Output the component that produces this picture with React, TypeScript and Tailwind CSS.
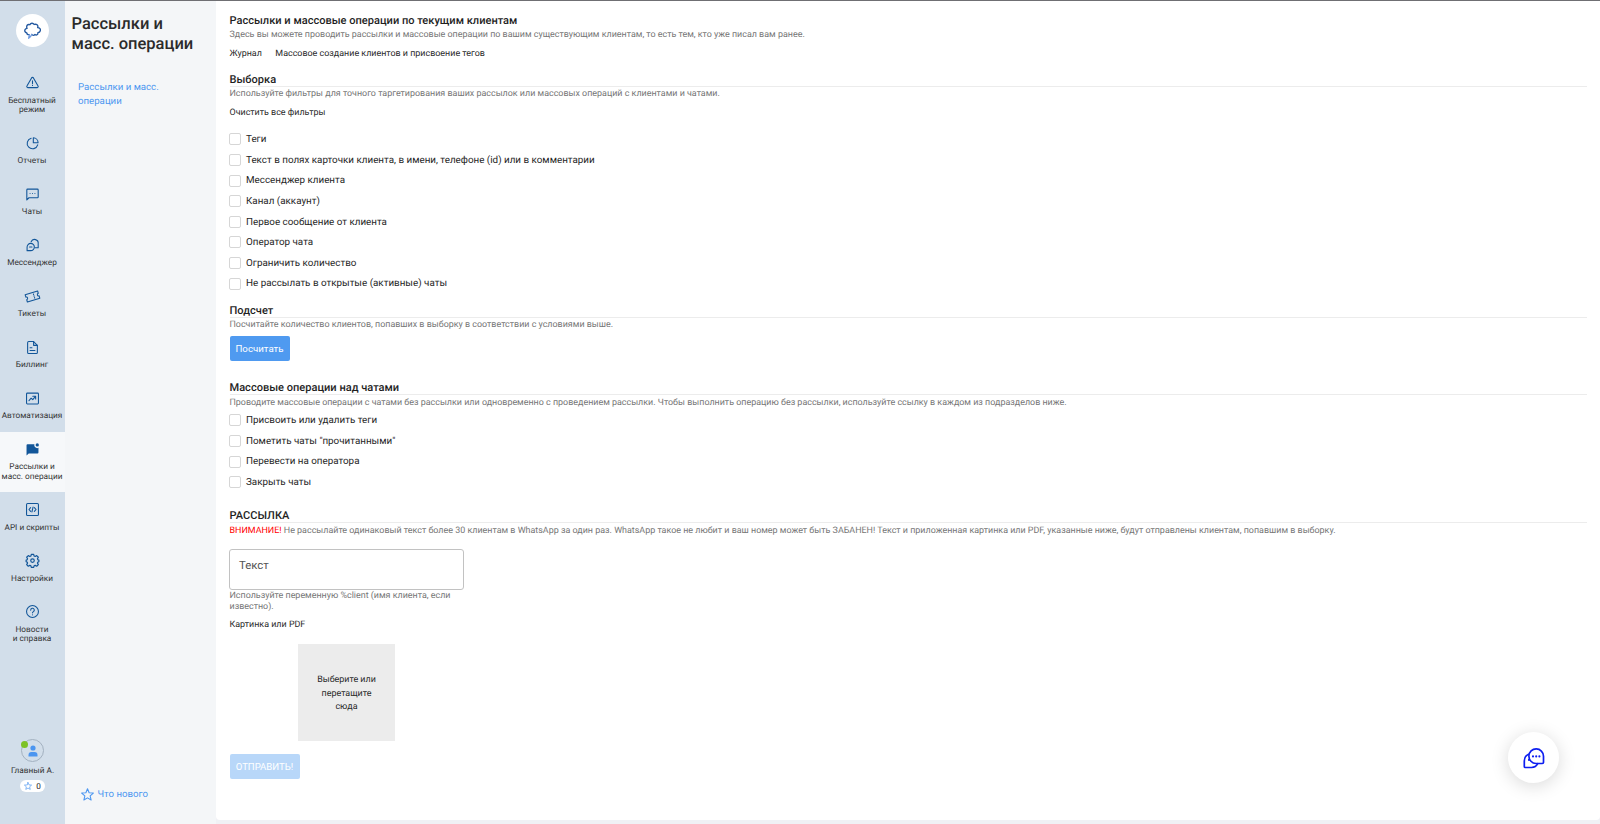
import type { ReactNode } from 'react';

function Glyph({ children, className = 'size-[15px]' }: { children: ReactNode; className?: string }) {
  return (
    <svg
      viewBox="0 0 24 24"
      className={className}
      fill="none"
      stroke="currentColor"
      strokeWidth="2"
      strokeLinecap="round"
      strokeLinejoin="round"
    >
      {children}
    </svg>
  );
}

const STAR = 'M12 1.500l3 7.200 7.800.6-5.900 5.200 1.800 7.700L12 18.200l-6.700 4 1.800-7.700L1.200 9.300l7.800-.6z';

type NavItem = { lines: string[]; icon: ReactNode; active?: boolean };

const NAV: NavItem[] = [
  {
    lines: ['Бесплатный', 'режим'],
    icon: (
      <>
        <path d="M10.300 3.500L1.700 18.500a1.900 1.900 0 0 0 1.700 2.900h17.200a1.900 1.900 0 0 0 1.700-2.900L13.700 3.500a2 2 0 0 0-3.400 0z" />
        <path d="M12 9v5M12 17.200v.3" />
      </>
    ),
  },
  {
    lines: ['Отчеты'],
    icon: (
      <>
        <path d="M9.500 2.300A9.900 9.900 0 1 0 21.600 14.500" />
        <path d="M13.500 1.500v9h8.800a9 9 0 0 0-8.800-9z" />
      </>
    ),
  },
  {
    lines: ['Чаты'],
    icon: (
      <>
        <path d="M1.500 22V3.500a1.500 1.500 0 0 1 1.500-1.500h18a1.500 1.500 0 0 1 1.500 1.500v13a1.500 1.500 0 0 1-1.500 1.500H5.500z" />
        <path d="M7.500 10v.1M12 10v.1M16.500 10v.1" />
      </>
    ),
  },
  {
    lines: ['Мессенджер'],
    icon: (
      <>
        <path d="M2 21.500v-6.500a6.700 6.700 0 1 1 6.700 6.500z" />
        <path d="M9.500 5a6.800 6.800 0 0 1 13 3.500V16h-6" />
        <path d="M6.500 14.800h4.500" />
      </>
    ),
  },
  {
    lines: ['Тикеты'],
    icon: (
      <g transform="rotate(-17 12 12)">
        <path d="M0 5h24v4.500a2.500 2.500 0 0 0 0 5V19H0v-4.500a2.500 2.500 0 0 0 0-5z" />
        <path d="M15 8v1M15 11.500v1M15 15v1" />
      </g>
    ),
  },
  {
    lines: ['Биллинг'],
    icon: (
      <>
        <path d="M14 1H5a2 2 0 0 0-2 2v18a2 2 0 0 0 2 2h14a2 2 0 0 0 2-2V8z" />
        <path d="M14 1v7h7M7.500 12.500h3.500M7.500 17.500h9" />
      </>
    ),
  },
  {
    lines: ['Автоматизация'],
    icon: (
      <>
        <rect x="1" y="2" width="22" height="20" rx="1.500" />
        <path d="M5.500 16l4-4.500 3 2.500 5-6M12.500 7.700h5.300v5" />
      </>
    ),
  },
  {
    lines: ['Рассылки и', 'масс. операции'],
    active: true,
    icon: (
      <>
        <path
          d="M1 23V4A1.800 1.800 0 0 1 2.800 2.200H15.500A5.500 5.500 0 0 0 23 8.900V17.500a1.800 1.800 0 0 1-1.800 1.800H5z"
          fill="currentColor"
          stroke="none"
        />
        <circle cx="20.800" cy="3.500" r="3" fill="currentColor" stroke="none" />
      </>
    ),
  },
  {
    lines: ['API и скрипты'],
    icon: (
      <>
        <rect x="1" y="1" width="22" height="22" rx="2" />
        <path d="M8.500 8.500L5.500 12l3 3.500M15.500 8.500l3 3.500-3 3.500M13 7.500l-2 9" />
      </>
    ),
  },
  {
    lines: ['Настройки'],
    icon: (
      <g transform="translate(12 12) scale(1.090) translate(-12 -12.300)">
        <path d="M10 1.800h4l.7 2.900 1.900.8 2.500-1.500 2.800 2.800-1.500 2.500.8 1.900 1.600.3v2.900l-1.700.6-.7 1.700 1.500 2.500-2.800 2.800-2.500-1.500-1.900.8-.7 2.700h-4l-.7-2.700-1.900-.8-2.500 1.500-2.800-2.800 1.500-2.500-.7-1.700-1.700-.6v-2.900l1.600-.3.8-1.900-1.500-2.500 2.800-2.800 2.500 1.500 1.900-.8z" />
        <circle cx="12" cy="12.500" r="3" />
      </g>
    ),
  },
  {
    lines: ['Новости', 'и справка'],
    icon: (
      <>
        <circle cx="12" cy="12" r="11" />
        <path d="M8.700 9.500a3.300 3.300 0 1 1 5 2.700c-1.200.7-1.700 1.200-1.700 2.300M12 18v.2" />
      </>
    ),
  },
];

function Sidebar() {
  return (
    <aside className="flex w-[65px] shrink-0 flex-col items-center bg-[#d2deea]">
      <div className="mt-[13px] mb-[18px] flex size-[33px] shrink-0 items-center justify-center rounded-full bg-white">
        <svg viewBox="0 0 24 24" className="size-[17px]" fill="none" strokeWidth="1.900" strokeLinecap="round" strokeLinejoin="round">
          <path
            stroke="#2459a0"
            d="M7.600 17.800C5.600 18.300 4 17.200 3.900 15.400C1.500 14.600.5 12.700 1.500 10.800C2 9.900 3.200 9.300 4.300 9.100C2.800 5.500 5 2.500 8.300 3.800C9.500 1.200 13 1.200 14.300 3.500C17.600 2.300 20.500 4.500 19.300 7.900C22.300 8 23.700 10 23 12.300C22.500 14.200 21 15 19.600 15.100C20 17.900 17.600 19.200 15.500 17.600C14.200 19.200 12 19.200 10.900 17.600"
          />
          <path stroke="#6f9be0" d="M7.600 17.800L6.600 23C8.600 21.800 10 19.800 10.900 17.600" />
        </svg>
      </div>
      {NAV.map((item) => (
        <div
          key={item.lines[0]}
          className={
            'flex w-full shrink-0 flex-col items-center pt-[11px] text-[#125699] ' +
            (item.lines.length > 1 ? 'h-[60.500px] ' : 'h-[51px] ') +
            (item.active ? 'bg-[#f6f8fa]' : '')
          }
        >
          <Glyph className="size-[13px] overflow-visible">{item.icon}</Glyph>
          <div className="mt-[7.800px] -ml-[1px] text-center text-[8.250px] leading-[9.600px] whitespace-nowrap text-[#333]">
            {item.lines.map((line) => (
              <div key={line}>{line}</div>
            ))}
          </div>
        </div>
      ))}
      <div className="mt-auto mb-[32px] flex flex-col items-center">
        <div className="relative flex size-[23px] items-center justify-center rounded-full border border-[#a3b1c0]">
          <svg viewBox="0 0 10 12" className="h-[12px] w-[10px]" fill="#4c96f0">
            <circle cx="5" cy="3" r="2.600" />
            <path d="M.5 11.500V10a3 3 0 0 1 3-3h3a3 3 0 0 1 3 3v1.500z" />
          </svg>
          <span className="absolute top-[1px] left-[-1px] size-[7px] rounded-full bg-[#7dc225]" />
        </div>
        <div className="mt-[4px] text-[8.250px] leading-[11px] whitespace-nowrap text-[#333]">Главный А.</div>
        <div className="mt-[3px] flex h-[12px] w-[25px] items-center justify-center gap-[4px] rounded-full bg-white text-[8.170px] text-[#222]">
          <Glyph className="size-[8px] overflow-visible text-[#4c96f0]">
            <path d={STAR} />
          </Glyph>
          <span>0</span>
        </div>
      </div>
    </aside>
  );
}

function SectionPanel() {
  return (
    <div className="flex w-[151px] shrink-0 flex-col bg-[#f4f6f8]">
      <h1 className="mt-[13.500px] ml-[6.500px] text-[16.500px] leading-[20px] font-medium whitespace-nowrap text-[#2b2b2b]">
        Рассылки и
        <br />
        масс. операции
      </h1>
      <a className="mt-[26.500px] ml-[13px] text-[9.670px] leading-[13.500px] whitespace-nowrap text-[#4c96f0]">
        Рассылки и масс.
        <br />
        операции
      </a>
      <a className="mt-auto mb-[22px] ml-[16px] flex items-center gap-[3.500px] text-[9.670px] leading-[14px] whitespace-nowrap text-[#4c96f0]">
        <Glyph className="size-[13px] overflow-visible">
          <path d={STAR} />
        </Glyph>
        <span className="pt-[2px]">Что нового</span>
      </a>
    </div>
  );
}

function Hint({ children }: { children: ReactNode }) {
  return <p className="pt-[1px] text-[8.940px] leading-[10.500px] whitespace-nowrap text-[#767676]">{children}</p>;
}

function SectionTitle({ children }: { children: ReactNode }) {
  return (
    <h2 className="mb-[1.500px] h-[14px] w-[1357px] border-b border-[#ececec] text-[11.050px] leading-[14px] font-medium whitespace-nowrap text-[#1f1f1f]">
      {children}
    </h2>
  );
}

function Checks({ items }: { items: string[] }) {
  return (
    <div className="flex flex-col">
      {items.map((label) => (
        <label key={label} className="flex h-[20.640px] items-center">
          <span className="-ml-[0.500px] size-[12px] rounded-[2px] border border-[#d6d6d6]" />
          <span className="ml-[5px] pt-[1.500px] text-[9.830px] leading-[12px] whitespace-nowrap text-[#262626]">{label}</span>
        </label>
      ))}
    </div>
  );
}

const FILTERS = [
  'Теги',
  'Текст в полях карточки клиента, в имени, телефоне (id) или в комментарии',
  'Мессенджер клиента',
  'Канал (аккаунт)',
  'Первое сообщение от клиента',
  'Оператор чата',
  'Ограничить количество',
  'Не рассылать в открытые (активные) чаты',
];

const OPERATIONS = ['Присвоить или удалить теги', 'Пометить чаты "прочитанными"', 'Перевести на оператора', 'Закрыть чаты'];

function Content() {
  return (
    <main className="mb-[4px] flex min-w-0 flex-1 flex-col items-start rounded-b-[4px] bg-white pl-[13.500px]">
      <h2 className="mt-[13px] mb-[0.500px] text-[11.050px] leading-[14px] font-medium whitespace-nowrap text-[#1f1f1f]">
        Рассылки и массовые операции по текущим клиентам
      </h2>
      <Hint>Здесь вы можете проводить рассылки и массовые операции по вашим существующим клиентам, то есть тем, кто уже писал вам ранее.</Hint>
      <nav className="mt-[7.500px] flex gap-[13.500px] text-[8.940px] leading-[12px] whitespace-nowrap text-[#2a2a2a]">
        <a>Журнал</a>
        <a>Массовое создание клиентов и присвоение тегов</a>
      </nav>

      <section className="mt-[13px]">
        <SectionTitle>Выборка</SectionTitle>
        <Hint>Используйте фильтры для точного таргетирования ваших рассылок или массовых операций с клиентами и чатами.</Hint>
        <a className="mt-[7px] mb-[10.500px] block text-[8.940px] leading-[12px] whitespace-nowrap text-[#2a2a2a]">
          Очистить все фильтры
        </a>
        <Checks items={FILTERS} />
      </section>

      <section className="mt-[9.500px]">
        <SectionTitle>Подсчет</SectionTitle>
        <Hint>Посчитайте количество клиентов, попавших в выборку в соответствии с условиями выше.</Hint>
        <button className="mt-[5px] block h-[25px] w-[60px] rounded-[2px] bg-[#4f9af0] pt-[2px] text-[9.700px] text-white">
          Посчитать
        </button>
      </section>

      <section className="mt-[20.500px]">
        <SectionTitle>Массовые операции над чатами</SectionTitle>
        <Hint>
          Проводите массовые операции с чатами без рассылки или одновременно с проведением рассылки. Чтобы выполнить операцию
          без рассылки, используйте ссылку в каждом из подразделов ниже.
        </Hint>
        <div className="mt-[2px]">
          <Checks items={OPERATIONS} />
        </div>
      </section>

      <section className="mt-[16.500px]">
        <SectionTitle>РАССЫЛКА</SectionTitle>
        <Hint>
          <span className="text-[#f00]">ВНИМАНИЕ!</span> Не рассылайте одинаковый текст более 30 клиентам в WhatsApp за один
          раз. WhatsApp такое не любит и ваш номер может быть ЗАБАНЕН! Текст и приложенная картинка или PDF, указанные ниже,
          будут отправлены клиентам, попавшим в выборку.
        </Hint>
        <div className="mt-[13px] -ml-[0.500px] h-[41px] w-[235px] rounded-[3px] border border-[#c2c2c2] px-[9px] pt-[7.500px] text-[11.400px] leading-[14px] text-[#555]">
          Текст
        </div>
        <Hint>
          Используйте переменную %client (имя клиента, если
          <br />
          известно).
        </Hint>
        <div className="mt-[6.500px] text-[8.940px] leading-[12px] text-[#2a2a2a]">Картинка или PDF</div>
        <div className="mt-[13.500px] ml-[68.500px] flex size-[97px] items-center justify-center bg-[#ececec] pt-[3.500px] text-center text-[8.940px] leading-[13.500px] text-[#2a2a2a]">
          Выберите или
          <br />
          перетащите
          <br />
          сюда
        </div>
        <button className="mt-[13px] block h-[25px] w-[70px] rounded-[2px] bg-[#b8d7f9] pt-[1px] text-[9.600px] text-white">
          ОТПРАВИТЬ!
        </button>
      </section>
    </main>
  );
}

function ChatBubble() {
  return (
    <button className="absolute top-[731px] left-[1508px] flex size-[51px] items-center justify-center rounded-full bg-white text-[#0d1ef0] shadow-[0_3px_18px_rgba(0,0,0,0.150)]">
      <svg viewBox="0 0 24 24" className="size-[24px]" fill="none" stroke="currentColor" strokeWidth="1.700" strokeLinecap="round" strokeLinejoin="round">
        <path d="M20.300 17.500H14a7.300 7.300 0 1 1 7.500-7.300v6.100a1.200 1.200 0 0 1-1.200 1.200z" />
        <path d="M6.500 8.300C4 9.300 2.300 12 2.300 15v5.500a1 1 0 0 0 1 1H9.500c3 0 5-1.300 6.200-3.800" />
        <path d="M7 13.800v.1M11 10.300v.1M14.200 10.300v.1M17.400 10.300v.1" strokeWidth="2.100" />
      </svg>
    </button>
  );
}

export default function App() {
  return (
    <div className="relative flex h-[824px] w-[1600px] overflow-hidden border-t border-[#6f6f73] bg-[#f0f1f5] font-['Roboto',sans-serif] [text-rendering:geometricPrecision]">
      <Sidebar />
      <SectionPanel />
      <Content />
      <ChatBubble />
    </div>
  );
}
